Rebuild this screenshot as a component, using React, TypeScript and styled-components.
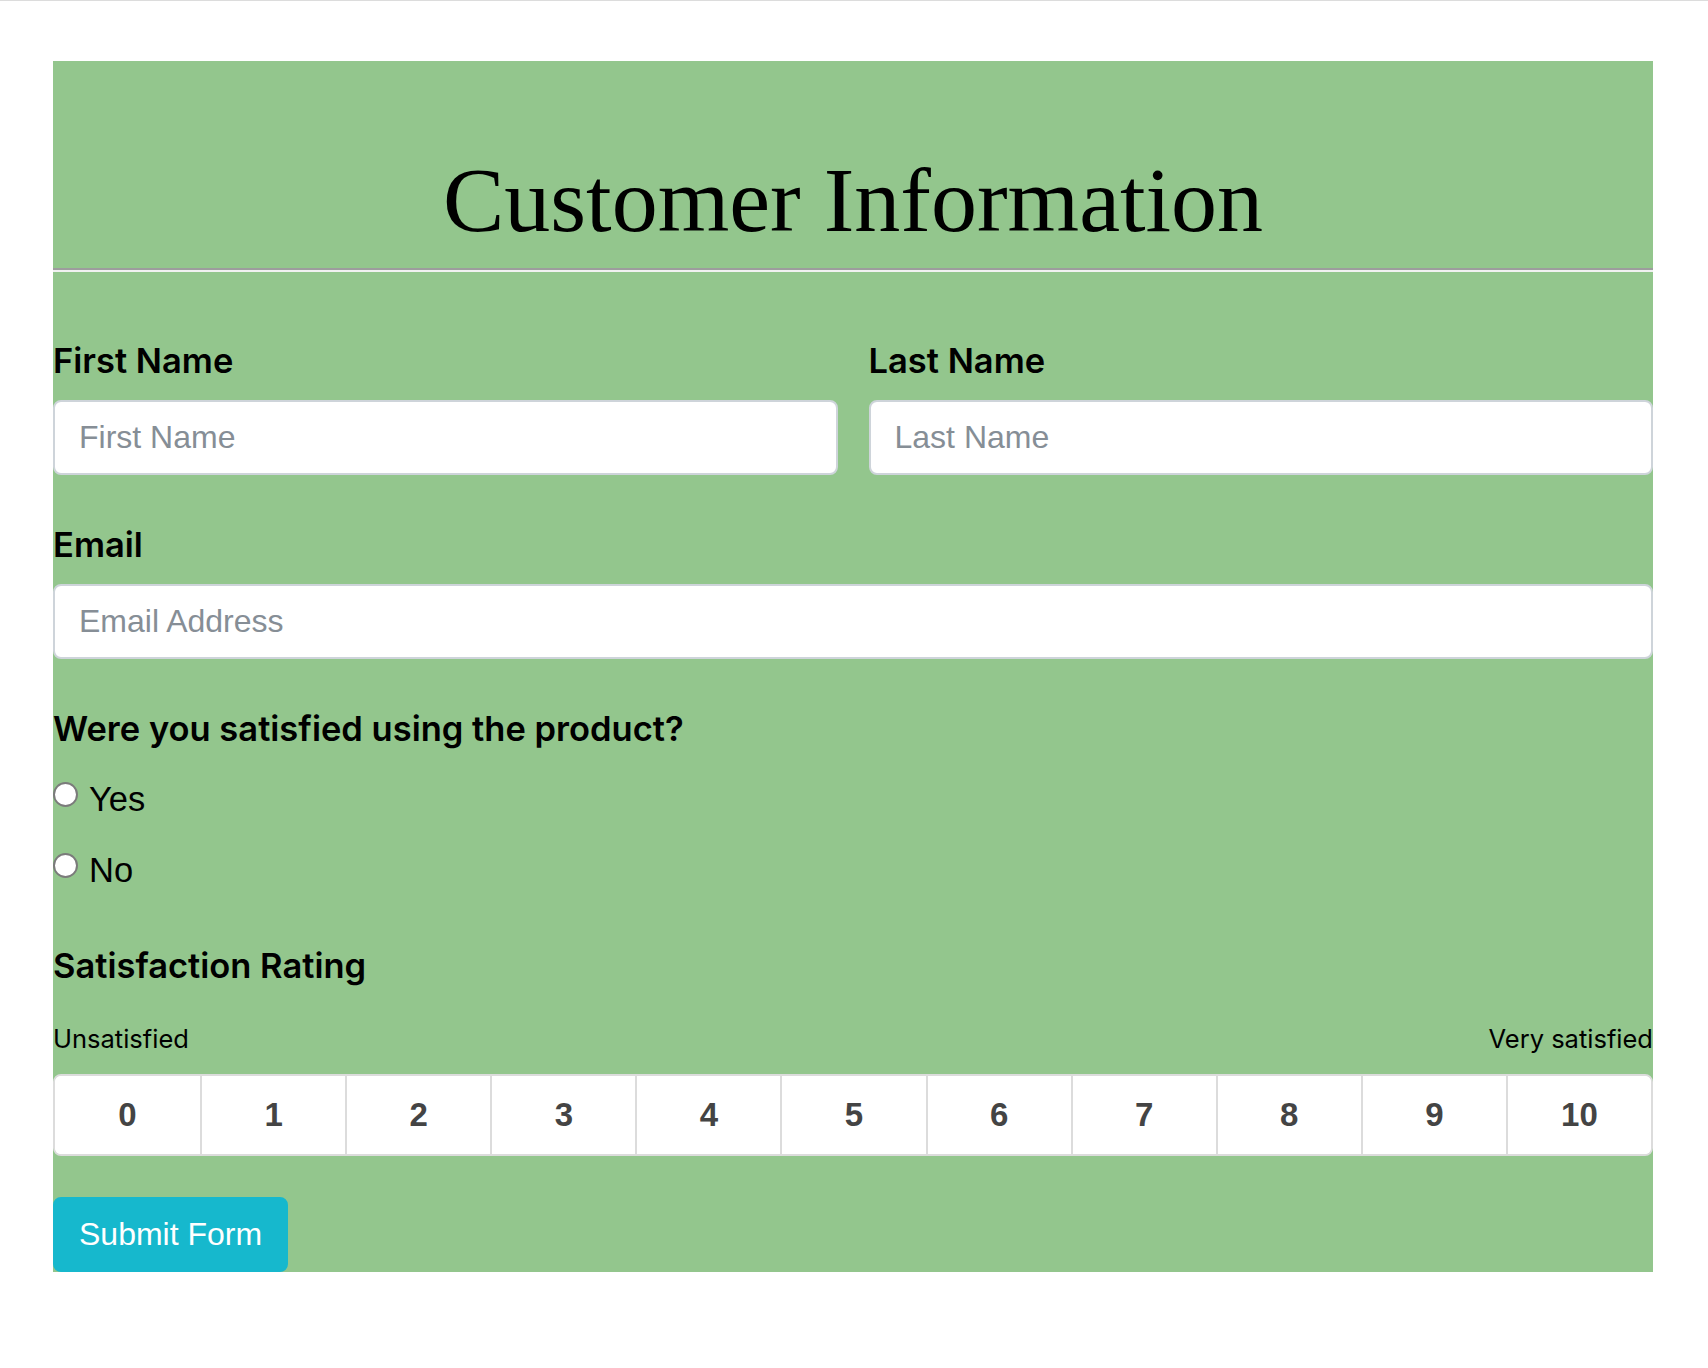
import React from "react";
import styled, { createGlobalStyle } from "styled-components";

const GlobalStyle = createGlobalStyle`
  *, *::before, *::after { box-sizing: border-box; }
  html, body { margin: 0; padding: 0; background: #ffffff; }
  body {
    border-top: 1px solid #dcdcdc;
    font-family: Inter, "Liberation Sans", Arial, sans-serif;
    color: #000;
  }
`;

const Page = styled.div`
  padding: 60px 0 97px 53px;
`;

const Card = styled.form`
  width: 1600px;
  background: #93c68d;
  display: flex;
  flex-direction: column;
`;

const Header = styled.header`
  padding-top: 84px;
  text-align: center;
`;

const Title = styled.h1`
  margin: 0;
  font-family: "Liberation Serif", "Times New Roman", serif;
  font-weight: 400;
  font-size: 92px;
  line-height: 110px;
  color: #000;
`;

const Divider = styled.hr`
  margin: 13px 0 0;
  height: 0;
  border: 0;
  border-top: 2px solid #9d9d9d;
  border-bottom: 2px solid #f1f1f1;
`;

const Body = styled.div`
  padding-top: 68px;
  display: flex;
  flex-direction: column;
`;

const TwoCols = styled.div`
  display: grid;
  grid-template-columns: 1fr 1fr;
  column-gap: 31px;
`;

const Group = styled.div`
  display: flex;
  flex-direction: column;
  margin-bottom: 49px;
`;

const Label = styled.label`
  display: block;
  font-weight: 600;
  font-size: 34.5px;
  line-height: 42px;
  margin-bottom: 18px;
  color: #000;
`;

const Heading = styled.div<{ $top?: number }>`
  font-weight: 600;
  font-size: 34.5px;
  line-height: 42px;
  color: #000;
  margin-top: ${(p) => p.$top ?? 0}px;
`;

const TextInput = styled.input`
  display: block;
  width: 100%;
  height: 75px;
  padding: 12px 24px;
  font-family: "Liberation Sans", Arial, sans-serif;
  font-size: 32px;
  line-height: 47px;
  color: #495057;
  background: #fff;
  border: 2px solid #ced4da;
  border-radius: 8px;
  outline: none;
  &::placeholder { color: #868e96; }
`;

const RadioList = styled.div`
  display: flex;
  flex-direction: column;
  gap: 23px;
  margin-top: 25px;
`;

const RadioRow = styled.label`
  display: flex;
  align-items: flex-start;
  gap: 11px;
  font-family: "Liberation Sans", Arial, sans-serif;
  font-size: 34.5px;
  line-height: 48px;
  color: #000;
`;

const Radio = styled.input`
  appearance: none;
  -webkit-appearance: none;
  flex-shrink: 0;
  width: 25px;
  height: 25px;
  margin: 7px 0 0 0;
  border: 2px solid #7b7b7b;
  border-radius: 50%;
  background: #fff;
`;

const ScaleLabels = styled.div`
  display: flex;
  justify-content: space-between;
  margin-top: 32px;
  font-size: 25.5px;
  line-height: 40px;
  color: #000;
`;

const RatingGroup = styled.div`
  margin-top: 15px;
  display: grid;
  grid-template-columns: repeat(11, 1fr);
  height: 82px;
  background: #fff;
  border: 2px solid #dcdcdc;
  border-radius: 8px;
  overflow: hidden;
`;

const RatingCell = styled.button<{ $first?: boolean }>`
  border: 0;
  border-left: ${(p) => (p.$first ? "0" : "2px solid #dcdcdc")};
  background: #fff;
  font-family: "Liberation Sans", Arial, sans-serif;
  font-weight: 700;
  font-size: 33px;
  color: #444;
  padding: 0;
  cursor: pointer;
`;

const Submit = styled.button`
  align-self: flex-start;
  margin-top: 41px;
  padding: 12px 24px;
  font-family: "Liberation Sans", Arial, sans-serif;
  font-size: 32px;
  line-height: 47px;
  color: #fff;
  background: #16b8cd;
  border: 2px solid #16b8cd;
  border-radius: 8px;
  cursor: pointer;
`;

export default function App() {
  const ratings = Array.from({ length: 11 }, (_, i) => i);
  return (
    <>
      <GlobalStyle />
      <Page>
        <Card onSubmit={(e) => e.preventDefault()}>
          <Header>
            <Title>Customer Information</Title>
          </Header>
          <Divider />
          <Body>
            <TwoCols>
              <Group>
                <Label htmlFor="first">First Name</Label>
                <TextInput id="first" placeholder="First Name" />
              </Group>
              <Group>
                <Label htmlFor="last">Last Name</Label>
                <TextInput id="last" placeholder="Last Name" />
              </Group>
            </TwoCols>
            <Group>
              <Label htmlFor="email">Email</Label>
              <TextInput id="email" type="email" placeholder="Email Address" />
            </Group>
            <Heading>Were you satisfied using the product?</Heading>
            <RadioList>
              <RadioRow>
                <Radio type="radio" name="satisfied" value="yes" />
                Yes
              </RadioRow>
              <RadioRow>
                <Radio type="radio" name="satisfied" value="no" />
                No
              </RadioRow>
            </RadioList>
            <Heading $top={51}>Satisfaction Rating</Heading>
            <ScaleLabels>
              <span>Unsatisfied</span>
              <span>Very satisfied</span>
            </ScaleLabels>
            <RatingGroup>
              {ratings.map((n) => (
                <RatingCell key={n} type="button" $first={n === 0}>
                  {n}
                </RatingCell>
              ))}
            </RatingGroup>
            <Submit type="submit">Submit Form</Submit>
          </Body>
        </Card>
      </Page>
    </>
  );
}
